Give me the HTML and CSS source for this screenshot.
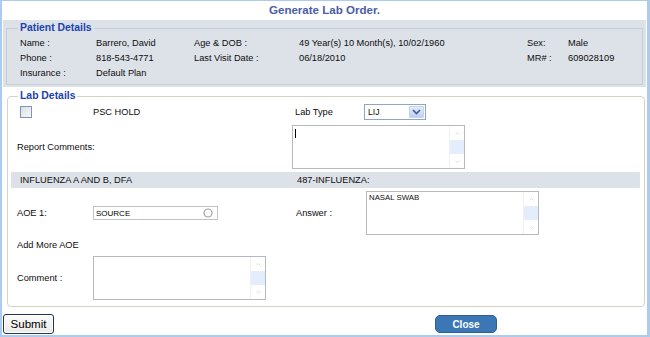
FILE: index.html
```html
<!DOCTYPE html>
<html>
<head>
<meta charset="utf-8">
<title>Generate Lab Order.</title>
<link rel="stylesheet" href="styles.css">
</head>
<body>
<div class="frame">
  <div class="title">Generate Lab Order.</div>
  <div class="patient-panel">
    <fieldset class="patient">
      <legend>Patient Details</legend>
      <div class="prow"><span>Name :</span><span>Barrero, David</span><span>Age &amp; DOB :</span><span>49 Year(s) 10 Month(s), 10/02/1960</span><span>Sex:</span><span>Male</span></div>
      <div class="prow"><span>Phone :</span><span>818-543-4771</span><span>Last Visit Date :</span><span>06/18/2010</span><span>MR# :</span><span>609028109</span></div>
      <div class="prow"><span>Insurance :</span><span>Default Plan</span></div>
    </fieldset>
  </div>
  <fieldset class="lab">
    <legend>Lab Details</legend>
    <div class="lrow r-psc">
      <span class="cb"></span>
      <span>PSC HOLD</span>
      <span class="c3">Lab Type</span>
      <div class="select"><span class="sval">LIJ</span><span class="sbtn"><svg width="9" height="6" viewBox="0 0 9 6"><path d="M1 1 L4.5 4.5 L8 1" fill="none" stroke="#4a5d82" stroke-width="1.7"/></svg></span></div>
    </div>
    <div class="lrow r-report">
      <span class="span2">Report Comments:</span>
      <div class="ta ta-report">
        <div class="ta-text"><span class="caret"></span></div>
        <div class="sb"><span class="sb-btn"><svg width="5" height="3" viewBox="0 0 5 3"><path d="M0.5 2.5 L2.5 0.5 L4.5 2.5" fill="none" stroke="#d4d4d4" stroke-width="0.8"/></svg></span><span class="sb-track"></span><span class="sb-btn"><svg width="5" height="3" viewBox="0 0 5 3"><path d="M0.5 0.5 L2.5 2.5 L4.5 0.5" fill="none" stroke="#d4d4d4" stroke-width="0.8"/></svg></span></div>
      </div>
    </div>
    <div class="lrow band">
      <span class="bt1">INFLUENZA A AND B, DFA</span>
      <span></span>
      <span class="bt3">487-INFLUENZA:</span>
    </div>
    <div class="lrow r-aoe">
      <span>AOE 1:</span>
      <div class="inp"><span>SOURCE</span><svg width="10" height="10" viewBox="0 0 10 10"><circle cx="5" cy="5" r="4" fill="none" stroke="#a2a2a2" stroke-width="1.2"/></svg></div>
      <span class="c3 c3a">Answer :</span>
      <div class="ta ta-answer">
        <div class="ta-text">NASAL SWAB</div>
        <div class="sb"><span class="sb-btn"><svg width="5" height="3" viewBox="0 0 5 3"><path d="M0.5 2.5 L2.5 0.5 L4.5 2.5" fill="none" stroke="#d4d4d4" stroke-width="0.8"/></svg></span><span class="sb-track"></span><span class="sb-btn"><svg width="5" height="3" viewBox="0 0 5 3"><path d="M0.5 0.5 L2.5 2.5 L4.5 0.5" fill="none" stroke="#d4d4d4" stroke-width="0.8"/></svg></span></div>
      </div>
    </div>
    <div class="lrow r-add">
      <span class="span2">Add More AOE</span>
    </div>
    <div class="lrow r-comment">
      <span>Comment :</span>
      <div class="ta">
        <div class="ta-text"></div>
        <div class="sb"><span class="sb-btn"><svg width="5" height="3" viewBox="0 0 5 3"><path d="M0.5 2.5 L2.5 0.5 L4.5 2.5" fill="none" stroke="#d4d4d4" stroke-width="0.8"/></svg></span><span class="sb-track"></span><span class="sb-btn"><svg width="5" height="3" viewBox="0 0 5 3"><path d="M0.5 0.5 L2.5 2.5 L4.5 0.5" fill="none" stroke="#d4d4d4" stroke-width="0.8"/></svg></span></div>
      </div>
    </div>
  </fieldset>
  <div class="footer">
    <button class="btn-submit" type="button">Submit</button>
    <button class="btn-close" type="button">Close</button>
  </div>
</div>
</body>
</html>
```
FILE: styles.css
```css
* { box-sizing: border-box; }
html, body { margin: 0; padding: 0; }
body {
  width: 650px;
  height: 337px;
  overflow: hidden;
  background: #fff;
  font-family: "Liberation Sans", Arial, sans-serif;
  font-size: 9.25px;
  color: #0d0d0d;
}
.frame {
  width: 650px;
  height: 337px;
  border-style: solid;
  border-color: #abcbef;
  border-width: 1px 3px 2px 2px;
  padding: 0 1px;
  display: flex;
  flex-direction: column;
}
.title {
  height: 19px;
  line-height: 19px;
  text-align: center;
  font-weight: bold;
  font-size: 11.56px;
  color: #4a5da6;
}
.patient-panel {
  background: #dde2e9;
  padding: 1px 3px 2px;
}
fieldset { margin: 0; min-width: 0; }
legend {
  font-weight: bold;
  font-size: 10.4px;
  line-height: 14px;
  color: #2142ae;
  padding: 0 2px;
}
.patient {
  border: 1px solid #c6ccd4;
  padding: 1px 6px 3px 13px;
}
.patient legend { margin-left: -2px; }
.prow {
  display: grid;
  grid-template-columns: 76px 98px 105px 228px 41px 1fr;
  height: 15px;
  line-height: 15px;
  white-space: nowrap;
}
.lab {
  margin: 2px 1px 0 4px;
  border: 1px solid #d4d4c6;
  border-radius: 4px;
  padding: 1px 5px 6px 9px;
}
.lab legend { margin-left: 1px; }
.lrow {
  display: grid;
  grid-template-columns: 76px 199px 72px 1fr;
  align-items: center;
  white-space: nowrap;
}
.r-psc { height: 16px; }
.r-report { height: 44px; margin-top: 5px; }
.band {
  height: 16px;
  margin: 3px -1px 0 -6px;
  padding-left: 6px;
  background: #dde2e9;
}
.bt1 { padding-left: 3px; }
.bt3 { padding-left: 5px; }
.r-aoe { height: 44px; margin-top: 3px; }
.r-add { height: 14px; margin-top: 3px; }
.r-comment { height: 44px; margin-top: 4px; }
.span2 { grid-column: 1 / 3; }
.c3 { padding-left: 3px; }
.c3a { padding-left: 4px; }
.cb {
  width: 12px;
  height: 12px;
  margin-left: 3px;
  border: 1px solid #8294ae;
  background: linear-gradient(135deg, #d9dfe8, #f7f8fa);
}
.select {
  width: 62px;
  height: 16px;
  border: 1px solid #8ea6c6;
  display: flex;
  align-items: stretch;
  background: #fff;
  font-size: 8.6px;
}
.sval { flex: 1; padding-left: 3px; line-height: 14px; }
.sbtn {
  width: 15px;
  display: flex;
  align-items: center;
  justify-content: center;
  margin: 1px;
  border: 1px solid #c4d3ee;
  border-radius: 1px;
  background: linear-gradient(#e3ecfc, #bccff4);
}
.ta {
  width: 173px;
  height: 44px;
  border: 1px solid #b6b9be;
  display: flex;
  background: #fff;
}
.ta-report { grid-column: 3 / 5; }
.ta-answer { margin-left: 2px; }
.ta-text {
  flex: 1;
  padding: 1px 2px;
  font-size: 7.8px;
  line-height: 9px;
}
.caret {
  display: block;
  width: 1px;
  height: 9px;
  margin-top: 2px;
  background: #000;
}
.sb {
  width: 15px;
  display: flex;
  flex-direction: column;
  border-left: 1px solid #f1f1f1;
}
.sb-btn {
  height: 14px;
  display: flex;
  align-items: center;
  justify-content: center;
}
.sb-track { flex: 1; background: #e3edfb; }
.inp {
  width: 125px;
  height: 14px;
  border: 1px solid #c2c2c2;
  display: flex;
  align-items: center;
  justify-content: space-between;
  padding: 0 4px 0 2px;
  font-size: 8px;
  color: #000;
}
.footer {
  display: flex;
  align-items: center;
  height: 28px;
  padding-top: 6px;
}
.btn-submit {
  width: 51px;
  height: 20px;
  margin: 0;
  padding: 0;
  border: 1px solid #23344c;
  border-radius: 3px;
  background: linear-gradient(#fbfbfa, #e9e9e6);
  box-shadow: inset 0 0 0 1px #ffffff;
  font-family: "Liberation Sans", Arial, sans-serif;
  font-size: 11.56px;
  color: #000;
}
.btn-close {
  width: 62px;
  height: 18px;
  margin: 0 0 0 381px;
  padding: 0;
  border: 1px solid #2d6196;
  border-radius: 5px;
  background: #3a77b4;
  font-family: "Liberation Sans", Arial, sans-serif;
  font-weight: bold;
  font-size: 10px;
  color: #fff;
}
```
